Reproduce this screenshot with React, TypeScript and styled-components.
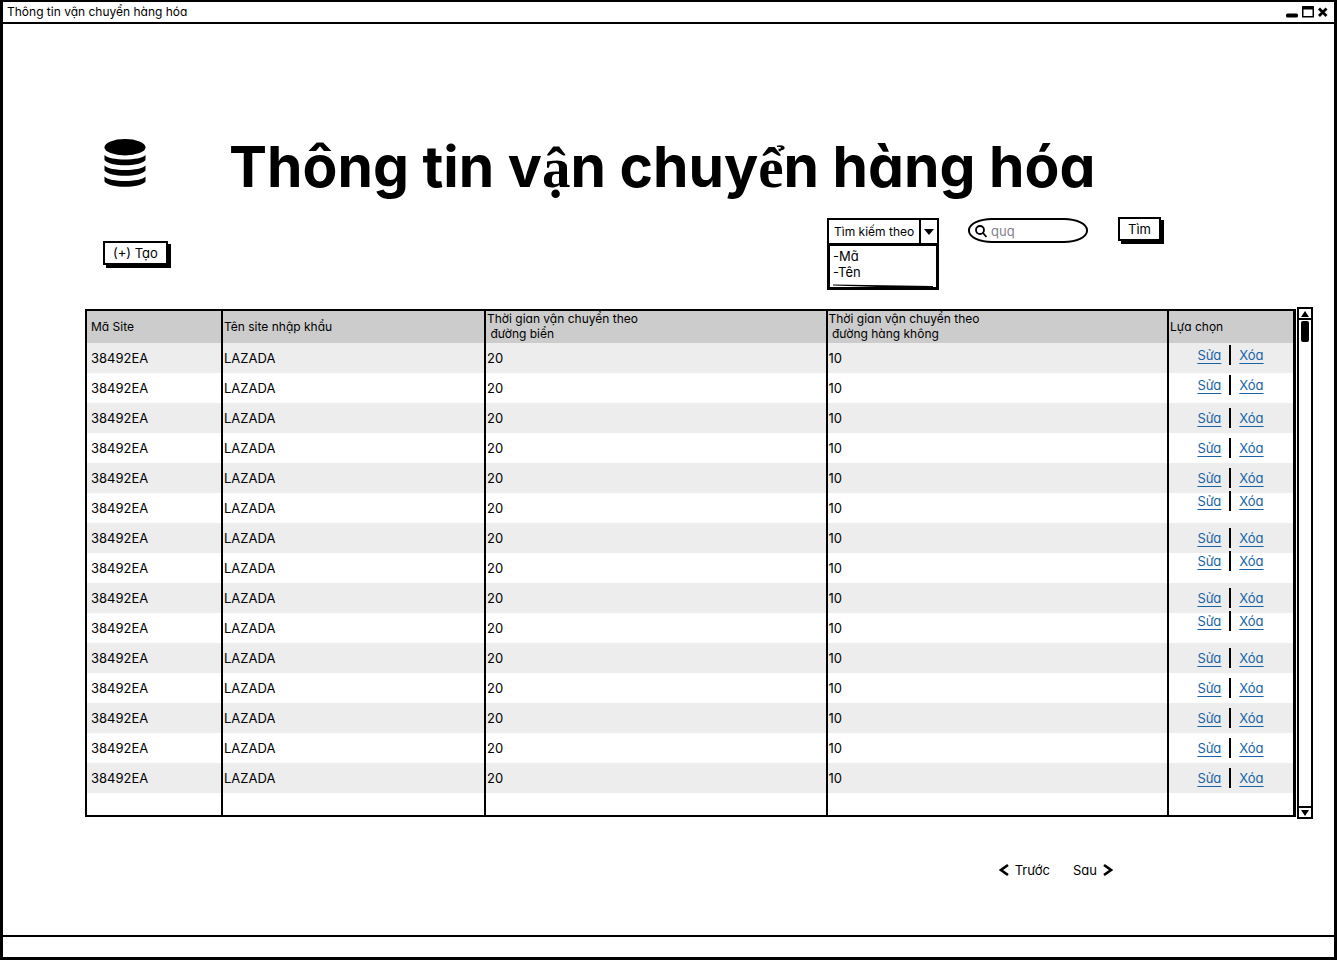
import React from 'react';
import styled, { createGlobalStyle } from 'styled-components';

const Global = createGlobalStyle`
  * { box-sizing: border-box; }
  html { background: #fff; }
  body {
    margin: 0;
    color: #000;
    font-family: Inter, "Liberation Sans", sans-serif;
    font-size: 13px;
    line-height: 16px;
    font-feature-settings: "cv11";
  }
  button, input, select { font: inherit; font-feature-settings: inherit; color: inherit; }
`;

const Window = styled.div`
  display: flex;
  flex-direction: column;
  min-height: 100vh;
  border: 3px solid #000;
  border-top-width: 2px;
  background: #fff;
`;

const TitleBar = styled.header`
  display: flex;
  align-items: center;
  justify-content: space-between;
  height: 22px;
  padding: 0 5px 0 4px;
  border-bottom: 2px solid #000;
  font-size: 12px;
`;

const WindowControls = styled.div`
  display: flex;
  align-items: center;
  gap: 2px;
`;

const IconButton = styled.button`
  display: flex;
  align-items: center;
  justify-content: center;
  padding: 0;
  border: 0;
  background: none;
`;

const Content = styled.main`
  flex: 1;
  padding: 107px 21px 0 82px;
`;

const Heading = styled.div`
  display: flex;
  align-items: center;
  gap: 83px;
  padding-left: 19px;
  height: 72px;
  svg { margin-bottom: 8px; }
`;

const Title = styled.h1`
  margin: 0;
  font-size: 57px;
  line-height: 72px;
  font-weight: 700;
  white-space: nowrap;
`;

const SerifGlyph = styled.span`
  font-family: "Liberation Serif", serif;
  line-height: 1;
`;

const Toolbar = styled.div`
  display: flex;
  align-items: flex-start;
  padding: 14px 152px 0 18px;
  height: 104px;
`;

const SketchButton = styled.button<{ $low?: boolean }>`
  height: 24px;
  margin-top: ${p => (p.$low ? 24 : 0)}px;
  padding: 0 8px;
  border: 2px solid #000;
  background: #fff;
  box-shadow: 3px 3px 0 #000;
  white-space: nowrap;
`;

const Filter = styled.div`
  width: 112px;
  margin: 1px 29px 0 auto;
`;

const SelectFrame = styled.div`
  display: grid;
  grid-template-columns: 1fr 18px;
  height: 25px;
  border: 2px solid #000;
  border-bottom: 0;
  font-size: 12px;
`;

const FilterSelect = styled.select`
  grid-area: 1 / 1 / 2 / 3;
  width: 100%;
  padding: 0 0 0 5px;
  border: 0;
  background: none;
  appearance: none;
`;

const SelectArrow = styled.span`
  grid-area: 1 / 2 / 2 / 3;
  display: flex;
  align-items: center;
  justify-content: center;
  border-left: 2px solid #000;
  pointer-events: none;
`;

const OptionList = styled.ul`
  height: 47px;
  margin: 0;
  padding: 2px 3px 0;
  border: 3px solid #000;
  list-style: none;
  svg { display: block; width: 100%; margin-top: 4px; }
`;

const SearchBox = styled.label`
  display: flex;
  align-items: center;
  width: 120px;
  height: 25px;
  margin: 1px 30px 0 0;
  padding: 0 5px;
  gap: 4px;
  border: 2px solid #000;
  border-radius: 24px / 12px;
  svg { flex: none; }
`;

const SearchInput = styled.input`
  flex: 1;
  min-width: 0;
  padding: 0;
  border: 0;
  outline: 0;
  background: none;
  &::placeholder { color: #85808c; opacity: 1; }
`;

const TableArea = styled.div`
  display: flex;
  align-items: stretch;
`;

const TableFrame = styled.div`
  flex: 1;
  min-height: 508px;
  margin: 2px 0;
  display: flex;
  border: 2px solid #000;
  border-right-width: 3px;
`;

const Table = styled.table`
  width: 100%;
  table-layout: fixed;
  border-collapse: separate;
  border-spacing: 0;
`;

const Col = styled.col<{ $w?: number }>`
  width: ${p => (p.$w ? `${p.$w}px` : 'auto')};
`;

const Th = styled.th`
  height: 32px;
  padding: 0 0 2px 1px;
  background: #ccc;
  font-size: 12px;
  font-weight: 400;
  line-height: 15px;
  text-align: left;
  white-space: pre;
  & + & { border-left: 2px solid #000; }
  &:first-child { padding-left: 4px; }
`;

const Row = styled.tr`
  height: 30px;
  &:nth-child(odd) { background: #ededed; }
  &:last-child { height: auto; background: #fff; }
`;

const Td = styled.td`
  padding: 0 0 1px 1px;
  & + & { border-left: 2px solid #000; }
  &:first-child { padding-left: 4px; }
  &:last-child { padding-bottom: 0; }
`;

type Lift = 'none' | 'slight' | 'high';
const liftPadding = { none: 0, slight: 6, high: 14 };

const Actions = styled.div<{ $lift: Lift }>`
  display: flex;
  align-items: center;
  justify-content: center;
  gap: 8px;
  height: 30px;
  padding-right: 2px;
  padding-bottom: ${p => liftPadding[p.$lift]}px;
`;

const ActionLink = styled.a`
  color: #1763a6;
  text-decoration: underline;
  text-underline-offset: 3px;
`;

const Divider = styled.span`
  flex: none;
  width: 2px;
  height: 20px;
  background: #000;
`;

const ScrollBar = styled.div`
  display: flex;
  flex-direction: column;
  width: 16px;
  margin-left: 1px;
  border: 2px solid #000;
`;

const ScrollArrow = styled(IconButton)`
  height: 9px;
  flex: none;
`;

const ScrollTrack = styled.div`
  flex: 1;
  padding-top: 1px;
  border: solid #000;
  border-width: 2px 0;
`;

const ScrollThumb = styled.div`
  width: 8px;
  height: 21px;
  margin: 0 auto;
  border-radius: 2px;
  background: #000;
`;

const Pager = styled.nav`
  display: flex;
  justify-content: flex-end;
  gap: 23px;
  padding: 43px 200px 0 0;
`;

const PagerButton = styled(IconButton)`
  gap: 6px;
  height: 16px;
`;

const StatusBar = styled.footer`
  height: 22px;
  border-top: 2px solid #000;
`;

const rows: Lift[] = [
  'slight', 'slight', 'none', 'none', 'none', 'high', 'none', 'high',
  'none', 'high', 'none', 'none', 'none', 'none', 'none',
];

const DatabaseIcon = () => (
  <svg width="42" height="50" viewBox="0 0 42 50" aria-hidden="true">
    <ellipse cx="21" cy="9.200" rx="20.500" ry="8.200" />
    <path d="M.5 17c5 6 36 6 41 0v5c-5 7-36 7-41 0zM.5 27.500c5 6 36 6 41 0v5c-5 7-36 7-41 0zM.5 38.500c5 6 36 6 41 0v5c-5 7-36 7-41 0z" />
  </svg>
);

const Chevron = ({ d }: { d: string }) => (
  <svg width="10" height="14" viewBox="0 0 10 14" fill="none" stroke="#000" strokeWidth="2.600" aria-hidden="true">
    <path d={d} />
  </svg>
);

export default function App() {
  return (
    <>
      <Global />
      <Window>
        <TitleBar>
          <span>Thông tin vận chuyển hàng hóa</span>
          <WindowControls>
            <IconButton aria-label="Minimize">
              <svg width="14" height="14"><rect x="1" y="8.500" width="12" height="4" rx="1.500" /></svg>
            </IconButton>
            <IconButton aria-label="Maximize">
              <svg width="14" height="14"><path d="M1 1h12v11.500H1zM2.500 4.500v6.500h9V4.500z" fillRule="evenodd" /></svg>
            </IconButton>
            <IconButton aria-label="Close">
              <svg width="12" height="14"><path d="M2 3.500l7.500 7.500M9.500 3.500l-7.500 7.500" stroke="#000" strokeWidth="2.800" /></svg>
            </IconButton>
          </WindowControls>
        </TitleBar>
        <Content>
          <Heading>
            <DatabaseIcon />
            <Title>
              Thông tin v<SerifGlyph>ậ</SerifGlyph>n chuy<SerifGlyph>ể</SerifGlyph>n hàng hóa
            </Title>
          </Heading>
          <Toolbar>
            <SketchButton $low>(+) Tạo</SketchButton>
            <Filter>
              <SelectFrame>
                <FilterSelect aria-label="Tìm kiếm theo">
                  <option>Tìm kiếm theo</option>
                </FilterSelect>
                <SelectArrow>
                  <svg width="10" height="6"><path d="M0 0h10L5 6z" /></svg>
                </SelectArrow>
              </SelectFrame>
              <OptionList>
                <li>-Mã</li>
                <li>-Tên</li>
                <svg height="4" viewBox="0 0 100 4" preserveAspectRatio="none">
                  <path d="M0 .5L100 2v1.500H60L0 1.500z" />
                </svg>
              </OptionList>
            </Filter>
            <SearchBox>
              <svg width="12" height="14" fill="none" stroke="#000" strokeWidth="1.800" aria-hidden="true">
                <circle cx="5" cy="6" r="4" />
                <path d="M8 9l3.500 4" />
              </svg>
              <SearchInput placeholder="quq" aria-label="Tìm" />
            </SearchBox>
            <SketchButton>Tìm</SketchButton>
          </Toolbar>
          <TableArea>
            <TableFrame>
              <Table>
                <colgroup>
                  <Col $w={134} />
                  <Col $w={263} />
                  <Col />
                  <Col />
                  <Col $w={126} />
                </colgroup>
                <thead>
                  <tr>
                    <Th>Mã Site</Th>
                    <Th>Tên site nhập khẩu</Th>
                    <Th>{'Thời gian vận chuyển theo\n đường biển'}</Th>
                    <Th>{'Thời gian vận chuyển theo\n đường hàng không'}</Th>
                    <Th>Lựa chọn</Th>
                  </tr>
                </thead>
                <tbody>
                  {rows.map((lift, i) => (
                    <Row key={i}>
                      <Td>38492EA</Td>
                      <Td>LAZADA</Td>
                      <Td>20</Td>
                      <Td>10</Td>
                      <Td>
                        <Actions $lift={lift}>
                          <ActionLink href="#">Sửa</ActionLink>
                          <Divider />
                          <ActionLink href="#">Xóa</ActionLink>
                        </Actions>
                      </Td>
                    </Row>
                  ))}
                  <Row><Td /><Td /><Td /><Td /><Td /></Row>
                </tbody>
              </Table>
            </TableFrame>
            <ScrollBar>
              <ScrollArrow aria-label="Scroll up">
                <svg width="8" height="6"><path d="M0 6h8L4 0z" /></svg>
              </ScrollArrow>
              <ScrollTrack><ScrollThumb /></ScrollTrack>
              <ScrollArrow aria-label="Scroll down">
                <svg width="8" height="6"><path d="M0 0h8L4 6z" /></svg>
              </ScrollArrow>
            </ScrollBar>
          </TableArea>
          <Pager>
            <PagerButton><Chevron d="M9 2L2 7l7 5" />Trước</PagerButton>
            <PagerButton>Sau<Chevron d="M1 2l7 5-7 5" /></PagerButton>
          </Pager>
        </Content>
        <StatusBar />
      </Window>
    </>
  );
}
